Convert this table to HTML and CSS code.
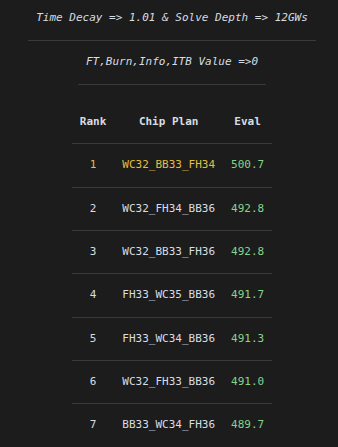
FILE: index.html
```html
<!DOCTYPE html>
<html>
<head>
<meta charset="utf-8">
<link rel="stylesheet" href="styles.css">
</head>
<body>
<div class="page">
  <div class="caption italic">Time Decay =&gt; 1.01 &amp; Solve Depth =&gt; 12GWs</div>
  <div class="caption italic">FT,Burn,Info,ITB Value =&gt;0</div>
  <table class="plans">
    <thead>
      <tr><th>Rank</th><th>Chip Plan</th><th>Eval</th></tr>
    </thead>
    <tbody>
      <tr class="top"><td>1</td><td>WC32_BB33_FH34</td><td class="eval">500.7</td></tr>
      <tr><td>2</td><td>WC32_FH34_BB36</td><td class="eval">492.8</td></tr>
      <tr><td>3</td><td>WC32_BB33_FH36</td><td class="eval">492.8</td></tr>
      <tr><td>4</td><td>FH33_WC35_BB36</td><td class="eval">491.7</td></tr>
      <tr><td>5</td><td>FH33_WC34_BB36</td><td class="eval">491.3</td></tr>
      <tr><td>6</td><td>WC32_FH33_BB36</td><td class="eval">491.0</td></tr>
      <tr><td>7</td><td>BB33_WC34_FH36</td><td class="eval">489.7</td></tr>
    </tbody>
  </table>
</div>
</body>
</html>
```
FILE: styles.css
```css
html, body {
  margin: 0;
  padding: 0;
  background: #1c1c1c;
}
body {
  font-family: "DejaVu Sans Mono", "Liberation Mono", monospace;
  font-size: 11px;
  color: #d6dde4;
}
.page {
  display: flex;
  flex-direction: column;
  align-items: center;
  padding-left: 6px;
}
.caption {
  padding: 11px 8px 15px;
  line-height: 14px;
  border-bottom: 1px solid #3a3a3a;
  color: #d6dde4;
}
.italic { font-style: italic; }
.caption + .caption {
  padding-top: 14px;
}
.plans {
  border-collapse: collapse;
  margin-top: 16px;
}
.plans th, .plans td {
  padding: 15px 8px;
  line-height: 12.33px;
  text-align: center;
  border-bottom: 1px solid #3a3a3a;
  white-space: nowrap;
}
.plans th { font-weight: bold; }
.plans tbody tr:last-child td { border-bottom: none; }
.plans .top td { color: #e2bf3f; }
.plans td.eval, .plans .top td.eval { color: #86d48a; }
```
